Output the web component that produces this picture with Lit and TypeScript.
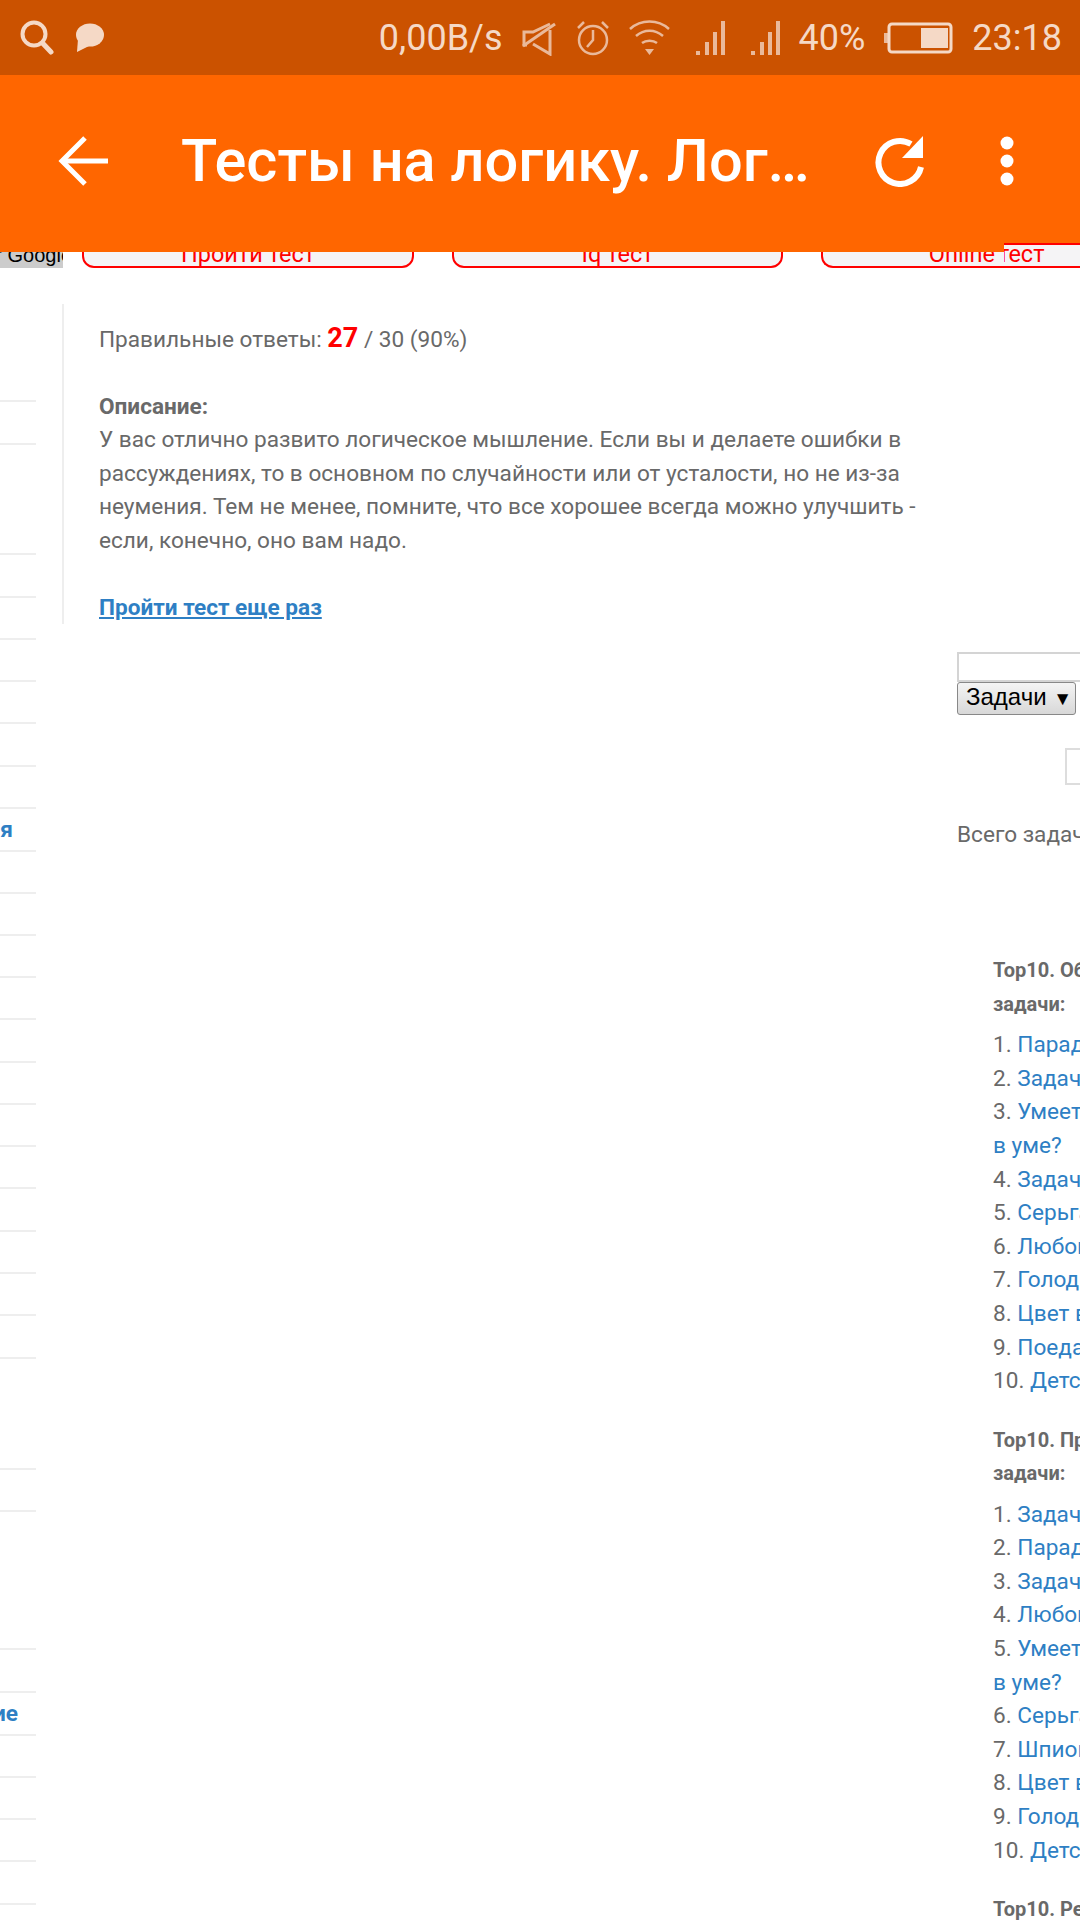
import { LitElement, html, css, svg } from "lit";
import { customElement } from "lit/decorators.js";

const lines = [400,443,553,596,638,680,722,765,807,850,892,934,976,1018,1061,1103,1145,1187,1230,1272,1314,1357,1468,1510,1648,1691,1734,1776,1818,1860,1903];
const labels: Record<number, [string, number]> = { 850: ["я", 23], 1734: ["ие", 18] };

const listA: [string, string?][] = [["Парадокс"],["Задача"],["Умеет", "в уме?"],["Задача"],["Серьга"],["Любовь"],["Голод"],["Цвет в"],["Поедание"],["Детская"]];
const listB: [string, string?][] = [["Задача"],["Парадокс"],["Задача"],["Любовь"],["Умеет", "в уме?"],["Серьга"],["Шпион"],["Цвет в"],["Голод"],["Детская"]];

@customElement("app-root")
export class AppRoot extends LitElement {
  static styles = css`
    :host { display: block; width: 1080px; height: 1920px; overflow: hidden; background: #fff; position: relative; font-family: Roboto, sans-serif; color: #696969; }
    .status { height: 75px; background: #cb5200; display: flex; align-items: center; padding: 0 18px 0 20px; color: #f5d9c6; font-size: 36px; }
    .status svg { display: block; flex: none; }
    .left { display: flex; align-items: center; gap: 21px; }
    .right { margin-left: auto; display: flex; align-items: center; gap: 19px; }
    .bar { height: 177px; background: #ff6600; display: flex; align-items: center; color: #fff; padding: 0 0 6px 58px; box-sizing: border-box; }
    .bar svg { display: block; flex: none; }
    .title { font-size: 59.5px; font-weight: 500; margin-left: 73px; width: 694px; white-space: nowrap; overflow: hidden; }
    .kebab { margin-left: 74px; }
    .strip { height: 18px; box-sizing: border-box; padding-bottom: 2px; display: flex; overflow: hidden; align-items: flex-end; position: relative; }
    .ad { width: 63px; height: 16px; background: #ccc; color: #000; font: 20px/7px "Liberation Sans", sans-serif; overflow: hidden; display: flex; justify-content: flex-end; white-space: nowrap; flex: none; }
    .ad span { flex: none; margin-right: -9px; }
    .tab { flex: none; height: 36px; box-sizing: border-box; border: 2px solid #f00; border-radius: 12px; background: #f5f4f6; color: #f00; font-size: 23.5px; line-height: 41px; text-align: center; white-space: nowrap; }
    .t1 { width: 332px; margin-left: 19px; }
    .t2 { width: 331px; margin-left: 38px; }
    .t3 { width: 300px; margin-left: 38px; padding-left: 32px; border-right: none; border-radius: 12px 0 0 12px; }
    .over { position: absolute; left: 1004px; top: 243px; width: 76px; height: 25px; box-sizing: border-box; border-top: 2px solid #f00; border-bottom: 2px solid #f00; background: #f5f4f6; color: #f00; font-size: 23.5px; line-height: 19px; text-indent: -6px; white-space: nowrap; overflow: hidden; }
    .cols { display: grid; grid-template-columns: 62px 895px 123px; margin-top: 34px; }
    .side { display: flex; flex-direction: column; }
    .row { width: 36px; box-sizing: border-box; border-bottom: 2px solid #eee; display: flex; align-items: center; justify-content: flex-end; overflow: hidden; white-space: nowrap; font-size: 22.6px; font-weight: 700; color: #2e7fc4; }
    .row span { flex: none; }
    .main { align-self: start; border-left: 2px solid #eee; padding: 18px 20px 0 35px; font-size: 22.6px; line-height: 33.45px; }
    .main p { margin: 0; }
    .main p + p { margin-top: 33.45px; }
    .score { color: #f00; font-size: 27px; font-weight: 700; }
    a { color: #2e7fc4; text-decoration: none; }
    .retake { font-weight: 700; text-decoration: underline; }
    .widget { padding-top: 348px; overflow: hidden; }
    .search { height: 30px; width: 140px; box-sizing: border-box; border: 2px solid #d4d4d4; }
    .drop { width: 119px; height: 33px; box-sizing: border-box; border: 1px solid #888; border-radius: 3px; background: linear-gradient(#f4f4f4, #d8d8d8); color: #000; font: 24px/27px "Liberation Sans", Arial, sans-serif; white-space: nowrap; padding-left: 8px; }
    .drop small { font-size: 19px; margin-left: 0; }
    .box { width: 60px; height: 37px; box-sizing: border-box; margin: 33px 0 0 108px; border: 2px solid #ddd; }
    .total { margin-top: 33px; font-size: 22.6px; line-height: 34px; white-space: nowrap; }
    .tops { margin-top: 102px; padding-left: 36px; white-space: nowrap; }
    .tops section { margin-bottom: 25.8px; }
    .tops h3 { margin: 0 0 7px; font-size: 20px; line-height: 33.6px; font-weight: 700; }
    .tops ol { list-style: none; margin: 0; padding: 0; font-size: 22.6px; line-height: 33.6px; }
  `;

  private icons() {
    return {
      search: svg`<svg width="34" height="36" viewBox="0 0 34 36" fill="none" stroke="#f5d9c6" stroke-width="4"><circle cx="14" cy="14" r="11.5"/><path d="M22.5 23 L31 32" stroke-width="5" stroke-linecap="round"/></svg>`,
      chat: svg`<svg width="29" height="30" viewBox="0 0 29 30" fill="#f5d9c6"><ellipse cx="15" cy="12" rx="14" ry="11.5"/><path d="M3 16 L2 29 L14 23 Z"/></svg>`,
      mute: svg`<svg width="35" height="36" viewBox="0 0 35 36" fill="none" stroke="#eab99a" stroke-width="3"><path d="M5 25 H2 V12 H11 L28 4"/><path d="M28 10 V34 L11 24"/><path d="M1 26 L33 4"/></svg>`,
      alarm: svg`<svg width="34" height="36" viewBox="0 0 34 36" fill="none" stroke="#eab99a" stroke-width="2.5"><circle cx="17" cy="20" r="14"/><path d="M17 10 V20 L11 27"/><path d="M2 8 L8 2 M32 8 L26 2"/></svg>`,
      wifi: svg`<svg width="41" height="36" viewBox="0 0 41 36" fill="none" stroke="#eab99a" stroke-width="2.5"><path d="M1 9 C12 -1 29 -1 40 9"/><path d="M7 16 C15 9 26 9 34 16"/><path d="M13 23 C17 20 24 20 28 23"/><path d="M16 29 H25 L20.5 35 Z" fill="#eab99a" stroke="none"/></svg>`,
      signal: svg`<svg width="36" height="36" viewBox="0 0 36 36" fill="#eab99a"><rect x="7" y="31" width="4" height="4"/><rect x="16" y="22" width="4" height="13"/><rect x="24" y="12" width="4" height="23"/><rect x="32" y="1" width="4" height="34"/></svg>`,
      battery: svg`<svg width="69" height="32" viewBox="0 0 69 32" fill="none"><rect x="0" y="11" width="4" height="10" fill="#eab99a"/><rect x="5" y="2" width="62" height="28" rx="3" stroke="#f5d9c6" stroke-width="3"/><rect x="37" y="6" width="27" height="20" fill="#f5d9c6"/></svg>`,
      back: svg`<svg width="50" height="50" viewBox="0 0 50 50" fill="none" stroke="#fff" stroke-width="5"><path d="M50 25 H4"/><path d="M27 2 L4 25 L27 48"/></svg>`,
      refresh: svg`<svg width="50" height="52" viewBox="0 0 50 52" fill="none"><path d="M46 32 A21.5 21.5 0 1 1 36 9" stroke="#fff" stroke-width="6"/><path d="M48 1 V23 H27 Z" fill="#fff"/></svg>`,
      kebab: svg`<svg width="16" height="52" viewBox="0 0 16 52" fill="#fff"><circle cx="8" cy="8" r="6.5"/><circle cx="8" cy="26" r="6.5"/><circle cx="8" cy="44" r="6.5"/></svg>`,
    };
  }

  private list(title1: string, title2: string, items: [string, string?][]) {
    return html`<section>
      <h3>${title1}<br />${title2}</h3>
      <ol>
        ${items.map(([a, b], i) => html`<li>${i + 1}. <a>${a}</a>${b ? html`<br /><a>${b}</a>` : ""}</li>`)}
      </ol>
    </section>`;
  }

  render() {
    const ic = this.icons();
    return html`
      <div class="status">
        <div class="left">${ic.search}${ic.chat}</div>
        <div class="right">
          <span>0,00B/s</span>${ic.mute}${ic.alarm}${ic.wifi}${ic.signal}${ic.signal}<span>40%</span>${ic.battery}<span>23:18</span>
        </div>
      </div>
      <div class="bar">
        ${ic.back}
        <div class="title">Тесты на логику. Лог…</div>
        ${ic.refresh}
        <div class="kebab">${ic.kebab}</div>
      </div>
      <div class="strip">
        <div class="ad"><span>for Google</span></div>
        <div class="tab t1">Пройти тест</div>
        <div class="tab t2">Iq тест</div>
        <div class="tab t3">Online тест</div>
      </div>
      <div class="over">тест</div>
      <div class="cols">
        <div class="side">
          ${lines.map((y, i) => html`<div class="row" style="height:${y + 2 - (i ? lines[i - 1] + 2 : 304)}px">${labels[y] ? html`<span style="padding-right:${labels[y][1]}px">${labels[y][0]}</span>` : ""}</div>`)}
        </div>
        <div class="main">
          <p>Правильные ответы: <span class="score">27</span> / 30 (90%)</p>
          <p><b>Описание:</b><br />У вас отлично развито логическое мышление. Если вы и делаете ошибки в рассуждениях, то в основном по случайности или от усталости, но не из-за неумения. Тем не менее, помните, что все хорошее всегда можно улучшить - если, конечно, оно вам надо.</p>
          <p><a class="retake">Пройти тест еще раз</a></p>
        </div>
        <div class="widget">
          <div class="search"></div>
          <div class="drop">Задачи <small>▼</small></div>
          <div class="box"></div>
          <div class="total">Всего задач</div>
          <div class="tops">
            ${this.list("Top10. Обычные", "задачи:", listA)}
            ${this.list("Top10. Простые", "задачи:", listB)}
            ${this.list("Top10. Редкие", "", [])}
          </div>
        </div>
      </div>
    `;
  }
}
